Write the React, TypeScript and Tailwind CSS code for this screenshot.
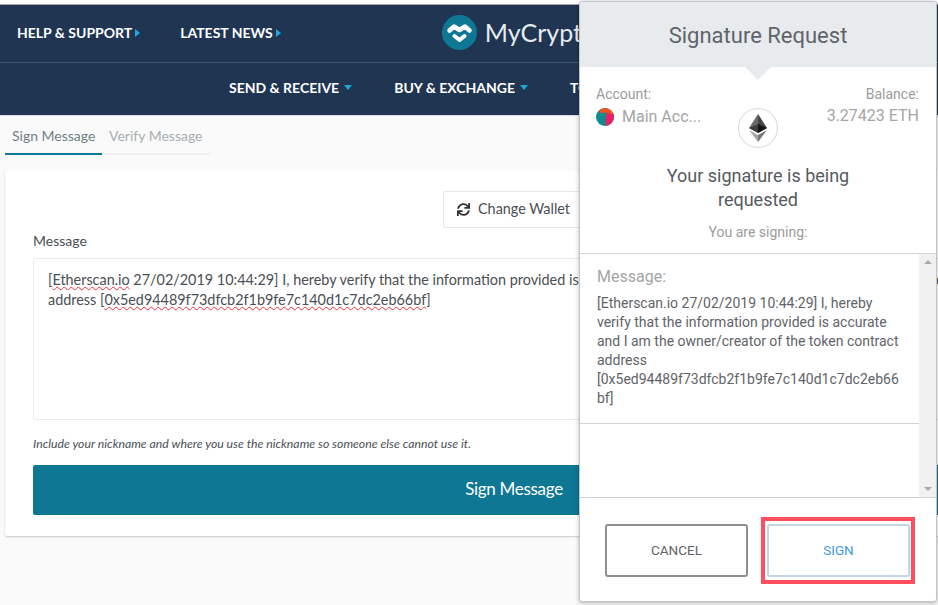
import { FaSync } from 'react-icons/fa';

function NavArrow() {
  return <span className="ml-[3px] inline-block border-y-[4px] border-l-[5px] border-y-transparent border-l-[#1fa8e0]" />;
}

function NavCaret() {
  return <span className="ml-[5px] inline-block border-x-[4px] border-t-[5px] border-x-transparent border-t-[#1fa8e0]" />;
}

function Logo() {
  return (
    <svg width="35" height="35" viewBox="0 0 35 35" className="shrink-0">
      <circle cx="17.5" cy="17.5" r="17.5" fill="#0e7794" />
      <path d="M7.5 15.5 L12 11.5 L17.5 15 L23 11.5 L27.5 15.5" fill="none" stroke="#fff" strokeWidth="4.5" strokeLinejoin="round" strokeLinecap="round" />
      <path d="M12.5 21 L17.5 25 L22.5 21" fill="none" stroke="#fff" strokeWidth="4" strokeLinejoin="round" strokeLinecap="round" />
    </svg>
  );
}

function EthIcon() {
  return (
    <div className="flex h-[40px] w-[40px] shrink-0 items-center justify-center rounded-full border border-[#d8d8d8] bg-white">
      <svg width="18" height="28" viewBox="0 0 18 28">
        <path d="M9 0 L0 14 L9 19 Z" fill="#6b6b6b" />
        <path d="M9 0 L18 14 L9 19 Z" fill="#454545" />
        <path d="M0 14 L9 10 L9 19 Z" fill="#3f3f3f" />
        <path d="M18 14 L9 10 L9 19 Z" fill="#161616" />
        <path d="M0 16 L9 28 L9 21 Z" fill="#a8a8a8" />
        <path d="M18 16 L9 28 L9 21 Z" fill="#777" />
      </svg>
    </div>
  );
}

function Avatar() {
  return (
    <svg width="18" height="18" viewBox="0 0 18 18" className="mr-2 shrink-0">
      <clipPath id="av"><circle cx="9" cy="9" r="9" /></clipPath>
      <g clipPath="url(#av)">
        <rect width="18" height="18" fill="#0f8a8f" />
        <path d="M3 0 H18 V7 L10 4.5 L4 5 Z" fill="#f4511e" />
        <path d="M10 4.5 L18 7 V18 H9.5 Z" fill="#ec1f66" />
      </g>
    </svg>
  );
}

function SignaturePopup() {
  return (
    <div className="absolute left-[579px] top-[1px] flex h-[601px] w-[358px] flex-col overflow-hidden rounded-[3px] border border-[#c4c4c4] bg-white font-['Roboto',sans-serif] shadow-[0_1px_4px_rgba(0,0,0,0.3)]">
      <div className="relative flex h-[65px] shrink-0 items-center justify-center bg-[#e8ebee] pt-[2px] text-[22px] text-[#5f6469]">
        Signature Request
        <span className="absolute left-[165px] top-[65px] border-x-[13px] border-t-[13px] border-x-transparent border-t-[#e8ebee]" />
      </div>
      <div className="flex h-[186px] shrink-0 flex-col">
        <div className="flex justify-between pl-[16px] pr-[17px] pt-[17px]">
          <div className="w-[125px]">
            <div className="text-[14px] leading-[20px] text-[#9c9c9c]">Account:</div>
            <div className="flex items-center pt-[1px] text-[16px] leading-[24px] text-[#a5a5a5]">
              <Avatar />
              <span>Main Acc...</span>
            </div>
          </div>
          <div className="pt-[24px]"><EthIcon /></div>
          <div className="w-[125px] text-right">
            <div className="text-[14px] leading-[20px] text-[#9c9c9c]">Balance:</div>
            <div className="text-[16px] leading-[24px] text-[#a5a5a5]">3.27423 ETH</div>
          </div>
        </div>
        <div className="mt-[16px] text-center text-[18px] leading-[24px] text-[#555a5f]">
          Your signature is being
          <br />
          requested
        </div>
        <div className="mt-[11px] text-center text-[14px] leading-[18px] text-[#9c9c9c]">You are signing:</div>
      </div>
      <div className="flex h-[245px] shrink-0 border-y border-[#d2d2d2]">
        <div className="min-w-0 flex-1">
          <div className="h-[170px] border-b border-[#d2d2d2] pl-[17px] pr-[18px] pt-[13px]">
            <div className="text-[16px] leading-[20px] text-[#a5a5a5]">Message:</div>
            <div className="mt-[7px] break-words text-[14px] leading-[19px] text-[#5f6469]">
              [Etherscan.io 27/02/2019 10:44:29] I, hereby verify that the information provided is accurate and I am the owner/creator of the token contract address [0x5ed94489f73dfcb2f1b9fe7c140d1c7dc2eb66bf]
            </div>
          </div>
        </div>
        <div className="flex w-[17px] shrink-0 flex-col items-center justify-between bg-[#f1f1f1] py-[6px]">
          <span className="border-x-[4px] border-b-[4px] border-x-transparent border-b-[#a8a8a8]" />
          <span className="border-x-[4px] border-t-[4px] border-x-transparent border-t-[#a8a8a8]" />
        </div>
      </div>
      <div className="flex flex-1 items-start gap-[19px] pl-[25px] pt-[26px] text-[13.5px]">
        <button className="h-[53px] w-[143px] rounded-[3px] border-2 border-[#8f8f8f] bg-white text-[#5f6469]">CANCEL</button>
        <div className="relative">
          <button className="h-[53px] w-[143px] rounded-[3px] border-2 border-[#c3d6e6] bg-white text-[#3f97ea]">SIGN</button>
          <span className="absolute -left-[6px] -top-[7px] h-[67px] w-[154px] border-[4px] border-[#ff4f5e]" />
        </div>
      </div>
    </div>
  );
}

export default function App() {
  return (
    <div className="relative h-[605px] w-[938px] overflow-hidden bg-white font-['Lato',sans-serif]">
      <div className="mt-[4px] border-t border-[#a9a9a9]">
        <div className="flex h-[58px] items-center border-b border-[#40566e] bg-[#1f3552] pb-[2px] pl-[17px] text-[14px] font-bold text-white">
          <span className="flex items-center">HELP &amp; SUPPORT<NavArrow /></span>
          <span className="ml-[40px] flex items-center">LATEST NEWS<NavArrow /></span>
          <span className="ml-[161px] flex items-center">
            <Logo />
            <span className="ml-[8px] text-[25px] font-normal text-[#e8ebee]">MyCrypto</span>
          </span>
        </div>
        <div className="flex h-[52px] items-center bg-[#1f3552] pb-[3px] pl-[229px] text-[14px] font-bold text-white">
          <span className="flex items-center">SEND &amp; RECEIVE<NavCaret /></span>
          <span className="ml-[42px] flex items-center">BUY &amp; EXCHANGE<NavCaret /></span>
          <span className="ml-[42px]">TOOLS</span>
        </div>
      </div>
      <div className="h-[490px] border-t border-[#d9dce0] bg-[#fafafa] pl-[5px]">
        <div className="flex h-[39px] w-[205px] items-end border-b-2 border-[#f0f0f0] text-[14px]">
          <span className="-mb-[2px] flex h-[39px] w-[97px] items-center border-b-2 border-[#0e7794] pl-[7px] pt-[2px] text-[#6f7f86]">Sign Message</span>
          <span className="flex h-[39px] items-center pl-[7px] pt-[4px] text-[#a6aeb3]">Verify Message</span>
        </div>
        <div className="mt-[15px] h-[366px] w-[1000px] rounded-[2px] bg-white pl-[28px] pt-[21px] shadow-[0_1px_2px_rgba(0,0,0,0.2)]">
          <div className="flex w-[962px] justify-center">
            <button className="flex h-[37px] w-[142px] items-center rounded-[2px] border border-[#e4e7ec] pb-[1px] pl-[13px] text-[14.4px] text-[#4a4f55]">
              <FaSync size={13} className="mr-[8px] text-[#333]" />
              Change Wallet
            </button>
          </div>
          <div className="mt-[3px] text-[14px] leading-[20px] text-[#4a4f55]">Message</div>
          <div className="mt-[7px] h-[162px] w-[962px] whitespace-nowrap rounded-[2px] border border-[#e8eaee] px-[14px] py-[11px] text-[14.4px] leading-[20px] text-[#4a4f55]">
            <div>
              [<span className="underline decoration-[#f0303c] decoration-wavy decoration-1">Etherscan.io</span> 27/02/2019 10:44:29] I, hereby verify that the information provided is accurate and I am the owner/creator of the token contract
            </div>
            <div>
              address [<span className="underline decoration-[#f0303c] decoration-wavy decoration-1">0x5ed94489f73dfcb2f1b9fe7c140d1c7dc2eb66bf</span>]
            </div>
          </div>
          <div className="mt-[15px] text-[12.25px] italic leading-[18px] text-[#4a4f55]">
            Include your nickname and where you use the nickname so someone else cannot use it.
          </div>
          <button className="mt-[12px] h-[50px] w-[962px] rounded-[2px] bg-[#0e7794] pb-[2px] text-[17px] tracking-[-0.3px] text-white">Sign Message</button>
        </div>
      </div>
      <SignaturePopup />
    </div>
  );
}
